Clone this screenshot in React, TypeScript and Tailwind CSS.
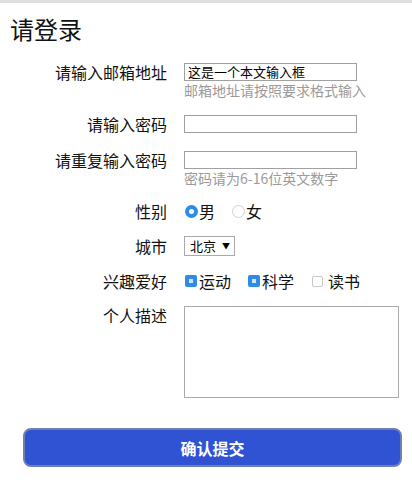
import React from "react";

const font = { fontFamily: '"Noto Sans CJK SC", "Noto Sans", sans-serif' };

function Label({ children }: { children: React.ReactNode }) {
  return (
    <div className="w-[167px] shrink-0 text-right text-[16px] leading-[18px] text-[#111]">{children}</div>
  );
}

function Radio({ checked }: { checked?: boolean }) {
  return checked ? (
    <span className="flex h-[13px] w-[13px] items-center justify-center rounded-full bg-[#2f8be6]">
      <span className="h-[5px] w-[5px] rounded-full bg-white" />
    </span>
  ) : (
    <span className="h-[13px] w-[13px] rounded-full border-[1.5px] border-[#d0d0d0] bg-white" />
  );
}

function Check({ checked }: { checked?: boolean }) {
  return checked ? (
    <span className="flex h-[12px] w-[12px] items-center justify-center rounded-[2px] bg-[#2f8be6]">
      <span className="h-[4px] w-[4px] bg-[#cfe6ff]" />
    </span>
  ) : (
    <span className="h-[11px] w-[11px] rounded-[2px] border border-[#c8c8c8] bg-white" />
  );
}

export default function App() {
  return (
    <div className="min-h-[502px] w-[412px] bg-white" style={font}>
      <div className="h-[3px] bg-[#dedede]" />
      <div className="pl-[10px] pt-[14px] text-[24px] leading-[24px] text-[#111]">请登录</div>

      <div className="mt-[22px] flex h-[18px] items-center">
        <Label>请输入邮箱地址</Label>
        <div className="ml-[17px] flex h-[18px] w-[173px] items-center border border-[#a0a0a0] pl-[3px] text-[13px] leading-[16px] text-black">
          这是一个本文输入框
        </div>
      </div>
      <div className="ml-[184px] text-[14px] leading-[18px] text-[#9a9a9a]">邮箱地址请按照要求格式输入</div>

      <div className="mt-[16px] flex h-[18px] items-center">
        <Label>请输入密码</Label>
        <div className="ml-[17px] h-[18px] w-[173px] border border-[#a0a0a0]" />
      </div>

      <div className="mt-[18px] flex h-[18px] items-center">
        <Label>请重复输入密码</Label>
        <div className="ml-[17px] h-[18px] w-[173px] border border-[#a0a0a0]" />
      </div>
      <div className="ml-[184px] text-[14px] leading-[18px] text-[#9a9a9a]">密码请为6-16位英文数字</div>

      <div className="mt-[15px] flex h-[18px] items-center">
        <Label>性别</Label>
        <div className="ml-[18px] flex items-center text-[16px] leading-[18px] text-[#111]">
          <Radio checked />
          <span className="ml-[1px]">男</span>
          <span className="ml-[17px]" />
          <Radio />
          <span className="ml-[1px]">女</span>
        </div>
      </div>

      <div className="mt-[16px] flex h-[20px] items-center">
        <Label>城市</Label>
        <div className="ml-[17px] flex h-[20px] w-[51px] items-center border border-[#a9a9a9] pl-[5px] text-[13px] leading-[16px] text-black">
          <span>北京</span>
          <span className="ml-[6px] text-[8px]">▼</span>
        </div>
      </div>

      <div className="mt-[16px] flex h-[18px] items-center">
        <Label>兴趣爱好</Label>
        <div className="ml-[18px] flex items-center text-[16px] leading-[18px] text-[#111]">
          <Check checked />
          <span className="ml-[2px]">运动</span>
          <span className="ml-[17px]" />
          <Check checked />
          <span className="ml-[2px]">科学</span>
          <span className="ml-[18px]" />
          <Check />
          <span className="ml-[5px]">读书</span>
        </div>
      </div>

      <div className="mt-[16px] flex items-start">
        <Label>个人描述</Label>
        <div className="ml-[17px] h-[92px] w-[215px] border border-[#a9a9a9]" />
      </div>

      <div className="ml-[23px] mt-[30px] flex h-[39px] w-[379px] items-center justify-center rounded-[8px] border-2 border-[#6f7fae] bg-[#2f53d2] text-[16px] font-bold text-white">
        确认提交
      </div>
    </div>
  );
}
